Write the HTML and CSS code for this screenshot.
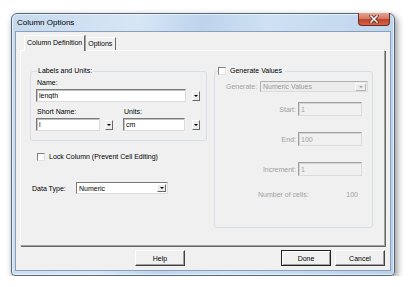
FILE: index.html
```html
<!DOCTYPE html>
<html lang="en">
<head>
    <meta charset="UTF-8">
    <title>Column Options</title>
    <link rel="stylesheet" href="styles.css">
</head>
<body>
    <div class="window">
        <div class="window__titlebar">
            <span class="window__title">Column Options</span>
            <span class="window__close">
                <svg width="10" height="8" viewBox="0 0 10 8">
                    <path d="M2 1 L8 7 M8 1 L2 7" stroke="#4a1a12" stroke-width="3" stroke-linecap="square"/>
                    <path d="M2 1 L8 7 M8 1 L2 7" stroke="#fff" stroke-width="1.6" stroke-linecap="square"/>
                </svg>
            </span>
        </div>

        <div class="window__client">
            <div class="tabs">
                <div class="tabs__tab tabs__tab--active">Column Definition</div>
                <div class="tabs__tab">Options</div>
            </div>

            <div class="panel">
                <div class="panel__left">
                    <fieldset class="group group--labels">
                        <legend class="group__legend">Labels and Units:</legend>
                        <label class="field__label">Name:</label>
                        <div class="field__row">
                            <input class="textbox textbox--name" type="text" value="length" readonly>
                            <span class="drop-btn"></span>
                        </div>
                        <div class="field__pair">
                            <div>
                                <label class="field__label field__label--spaced">Short Name:</label>
                                <div class="field__row">
                                    <input class="textbox textbox--short" type="text" value="l" readonly>
                                    <span class="drop-btn"></span>
                                </div>
                            </div>
                            <div class="field__units">
                                <label class="field__label field__label--spaced">Units:</label>
                                <div class="field__row">
                                    <input class="textbox textbox--units" type="text" value="cm" readonly>
                                    <span class="drop-btn"></span>
                                </div>
                            </div>
                        </div>
                    </fieldset>

                    <div class="check-row">
                        <span class="checkbox"></span>
                        <span>Lock Column (Prevent Cell Editing)</span>
                    </div>

                    <div class="type-row">
                        <span class="type-row__label">Data Type:</span>
                        <div class="combo combo--type">
                            <span>Numeric</span>
                            <span class="combo__arrow"></span>
                        </div>
                    </div>
                </div>

                <div class="panel__right">
                    <fieldset class="group group--generate">
                        <legend class="group__legend group__legend--check">
                            <span class="checkbox"></span>
                            <span>Generate Values</span>
                        </legend>

                        <div class="gen-combo-row">
                            <span class="gen-combo-row__label">Generate:</span>
                            <div class="combo combo--disabled">
                                <span>Numeric Values</span>
                                <span class="combo__arrow"></span>
                            </div>
                        </div>

                        <div class="gen-row gen-row--start">
                            <span>Start:</span>
                            <input class="textbox textbox--disabled" type="text" value="1" disabled>
                        </div>
                        <div class="gen-row">
                            <span>End:</span>
                            <input class="textbox textbox--disabled" type="text" value="100" disabled>
                        </div>
                        <div class="gen-row">
                            <span>Increment:</span>
                            <input class="textbox textbox--disabled" type="text" value="1" disabled>
                        </div>

                        <div class="cells-row">
                            <span>Number of cells:</span>
                            <span>100</span>
                        </div>
                    </fieldset>
                </div>
            </div>

            <div class="buttons">
                <button class="buttons__btn buttons__btn--help">Help</button>
                <button class="buttons__btn buttons__btn--default">Done</button>
                <button class="buttons__btn">Cancel</button>
            </div>
        </div>
    </div>
</body>
</html>
```

FILE: styles.css
```css
body {
    margin: 0;
    background-color: #fff;
    font-family: "Liberation Sans", Arial, sans-serif;
    font-size: 7px;
    color: #000;
}

.window {
    box-sizing: border-box;
    width: 384px;
    height: 263px;
    margin: 13px 0 0 11px;
    padding: 0 3px 4px;
    display: flex;
    flex-direction: column;
    border: 1px solid #56677c;
    border-radius: 6px 6px 4px 4px;
    background: linear-gradient(100deg, #c6d9ee 0%, #d7e6f5 30%, #bcd4ec 45%, #cfe1f3 60%, #b9d1eb 100%);
    box-shadow: 2px 3px 7px rgba(0, 0, 0, 0.45), inset 0 0 0 1px rgba(255, 255, 255, 0.6);
}

.window__titlebar {
    height: 17px;
    display: flex;
    justify-content: space-between;
    align-items: flex-start;
}

.window__title {
    padding-left: 2px;
    font-size: 8px;
    line-height: 17px;
    color: #000;
}

.window__close {
    width: 32px;
    height: 13px;
    margin-top: -1px;
    margin-right: 1px;
    display: flex;
    justify-content: center;
    align-items: center;
    box-sizing: border-box;
    border: 1px solid #6d2a1f;
    border-top: none;
    border-radius: 0 0 4px 4px;
    background: linear-gradient(180deg, #e5a593 0%, #d67c64 45%, #c0432a 55%, #d2654a 100%);
}

.window__client {
    flex: 1;
    display: flex;
    flex-direction: column;
    padding: 3px 5px 4px 4px;
    border: 1px solid #8ba0b8;
    background-color: #f0f0f0;
}

/* tabs */
.tabs {
    display: flex;
    align-items: flex-end;
    height: 15px;
    padding-left: 4px;
}

.tabs__tab {
    box-sizing: border-box;
    height: 13px;
    padding: 0 3px;
    line-height: 12px;
    border-top: 1px solid #fff;
    border-right: 1px solid #696969;
    background-color: #f0f0f0;
}

.tabs__tab--active {
    position: relative;
    z-index: 1;
    height: 16px;
    margin-bottom: -1px;
    padding: 0 2px;
    line-height: 14px;
    border-left: 1px solid #fff;
    border-right: 1px solid #696969;
    box-shadow: 1px 0 0 #a0a0a0;
}

.panel {
    box-sizing: border-box;
    height: 196px;
    display: grid;
    grid-template-columns: 177px 159px;
    column-gap: 7px;
    align-items: start;
    padding: 15px 0 0 9px;
    border-top: 1px solid #fff;
    border-left: 1px solid #fff;
    border-right: 1px solid #a0a0a0;
    border-bottom: 1px solid #a0a0a0;
    box-shadow: 1px 1px 0 #696969;
}

/* group boxes */
.group {
    margin: 0;
    min-width: 0;
    border: 1px solid #d5dfe5;
    border-radius: 3px;
}

.group__legend {
    height: 10px;
    padding: 0 1px;
    line-height: 10px;
}

.group--labels {
    padding: 0 6px 9px 5px;
}

.group--labels .group__legend {
    margin-left: 1px;
}

.group--generate {
    padding: 0 0 28px;
}

.group__legend--check {
    display: flex;
    align-items: center;
    gap: 4px;
    margin-left: 2px;
    padding-right: 3px;
}

.field__label {
    display: block;
    height: 9px;
    margin: 2px 0 2px 1px;
    line-height: 9px;
}

.field__label--spaced {
    margin-top: 5px;
}

.field__row {
    display: flex;
    align-items: center;
}

.field__pair {
    display: flex;
}

.field__units {
    margin-left: 10px;
}

.textbox {
    box-sizing: border-box;
    height: 13px;
    margin: 0;
    padding: 0 2px;
    font-family: "Liberation Sans", Arial, sans-serif;
    font-size: 7px;
    color: #000;
    border-top: 1px solid #7a7a7a;
    border-left: 1px solid #7a7a7a;
    border-right: 1px solid #dcdcdc;
    border-bottom: 1px solid #dcdcdc;
    box-shadow: inset 1px 1px 0 #c0c0c0;
    background-color: #fff;
    outline: none;
}

.textbox--name {
    width: 150px;
}

.textbox--short {
    width: 64px;
}

.textbox--units {
    width: 62px;
}

.textbox--disabled {
    width: 64px;
    height: 14px;
    color: #a0a0a0;
    background-color: #f0f0f0;
    border-top-color: #a0a0a0;
    border-left-color: #a0a0a0;
    box-shadow: inset 1px 1px 0 #d4d4d4;
}

.drop-btn {
    box-sizing: border-box;
    width: 8px;
    height: 10px;
    margin-left: 6px;
    display: flex;
    justify-content: center;
    align-items: center;
    border-top: 1px solid #fff;
    border-left: 1px solid #fff;
    border-right: 1px solid #696969;
    border-bottom: 1px solid #696969;
    background-color: #ececec;
}

.field__pair .field__row .drop-btn {
    margin-left: 5px;
}

.field__units .field__row .drop-btn {
    margin-left: 7px;
}

.drop-btn::after,
.combo__arrow::after {
    content: "";
    border-left: 2px solid transparent;
    border-right: 2px solid transparent;
    border-top: 2px solid #000;
}

/* checkboxes */
.checkbox {
    box-sizing: border-box;
    width: 8px;
    height: 8px;
    border-top: 1px solid #808080;
    border-left: 1px solid #808080;
    border-right: 1px solid #e0e0e0;
    border-bottom: 1px solid #e0e0e0;
    background-color: #fff;
}

.check-row {
    height: 9px;
    margin: 11px 0 0 7px;
    display: flex;
    align-items: center;
    gap: 4px;
}

.type-row {
    height: 12px;
    margin: 21px 0 0 2px;
    display: flex;
    align-items: center;
}

.type-row__label {
    width: 44px;
}

.combo {
    box-sizing: border-box;
    height: 12px;
    display: flex;
    justify-content: space-between;
    align-items: center;
    padding: 0 1px 0 2px;
    border-top: 1px solid #7a7a7a;
    border-left: 1px solid #7a7a7a;
    border-right: 1px solid #dcdcdc;
    border-bottom: 1px solid #dcdcdc;
    background-color: #fff;
}

.combo--type {
    width: 92px;
}

.combo__arrow {
    box-sizing: border-box;
    width: 9px;
    height: 8px;
    display: flex;
    justify-content: center;
    align-items: center;
    border-top: 1px solid #fff;
    border-left: 1px solid #fff;
    border-right: 1px solid #696969;
    border-bottom: 1px solid #696969;
    background-color: #ececec;
}

.combo--disabled {
    width: 108px;
    height: 11px;
    color: #9a9a9a;
    background-color: #ececec;
    border-top-color: #b0b0b0;
    border-left-color: #b0b0b0;
}

.combo--disabled .combo__arrow {
    width: 11px;
    border-right-color: #b8b8b8;
    border-bottom-color: #b8b8b8;
}

.combo--disabled .combo__arrow::after {
    border-top-color: #a0a0a0;
}

/* generate values */
.gen-combo-row {
    margin: 5px 0 0 11px;
    display: flex;
    align-items: center;
    color: #a0a0a0;
}

.gen-combo-row__label {
    width: 34px;
}

.gen-row {
    height: 14px;
    margin-top: 16px;
    padding-right: 10px;
    display: flex;
    justify-content: flex-end;
    align-items: center;
    gap: 2px;
    color: #a0a0a0;
}

.gen-row--start {
    margin-top: 10px;
}

.cells-row {
    height: 9px;
    margin-top: 14px;
    padding: 0 14px 0 43px;
    display: flex;
    justify-content: space-between;
    line-height: 9px;
    color: #a0a0a0;
}

/* bottom buttons */
.buttons {
    margin-top: 4px;
    display: flex;
    gap: 4px;
}

.buttons__btn {
    box-sizing: border-box;
    width: 50px;
    height: 16px;
    padding: 0;
    font-family: "Liberation Sans", Arial, sans-serif;
    font-size: 7px;
    color: #000;
    background-color: #f0f0f0;
    border-top: 1px solid #fff;
    border-left: 1px solid #fff;
    border-right: 1px solid #404040;
    border-bottom: 1px solid #404040;
    box-shadow: inset -1px -1px 0 #a0a0a0;
}

.buttons__btn--help {
    margin-left: 115px;
    margin-right: auto;
}

.buttons__btn--default {
    outline: 1px solid #202020;
    outline-offset: -1px;
    border-top-color: #202020;
    border-left-color: #202020;
    box-shadow: inset 1px 1px 0 #fff, inset -1px -1px 0 #a0a0a0;
}
```
